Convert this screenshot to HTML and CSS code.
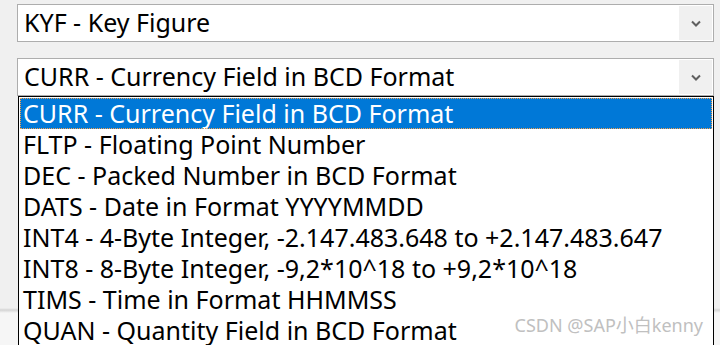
FILE: index.html
```html
<!DOCTYPE html>
<html lang="en">
<head>
    <meta charset="UTF-8">
    <title>Data Type</title>
    <link rel="stylesheet" href="styles.css">
</head>
<body>

<div class="form">
    <div class="combo">
        <div class="combo-text">KYF - Key Figure</div>
        <div class="combo-arrow">
            <svg width="10" height="7" viewBox="0 0 10 7"><path d="M1 1.5 L5 5.5 L9 1.5" fill="none" stroke="#5f5f5f" stroke-width="2"/></svg>
        </div>
    </div>

    <div class="combo combo-open">
        <div class="combo-text">CURR - Currency Field in BCD Format</div>
        <div class="combo-arrow">
            <svg width="10" height="7" viewBox="0 0 10 7"><path d="M1 1.5 L5 5.5 L9 1.5" fill="none" stroke="#5f5f5f" stroke-width="2"/></svg>
        </div>
    </div>

    <ul class="dropdown">
        <li class="selected">CURR - Currency Field in BCD Format</li>
        <li>FLTP - Floating Point Number</li>
        <li>DEC - Packed Number in BCD Format</li>
        <li>DATS - Date in Format YYYYMMDD</li>
        <li>INT4 - 4-Byte Integer, -2.147.483.648 to +2.147.483.647</li>
        <li>INT8 - 8-Byte Integer, -9,2*10^18 to +9,2*10^18</li>
        <li>TIMS - Time in Format HHMMSS</li>
        <li>QUAN - Quantity Field in BCD Format</li>
    </ul>
</div>

<div class="watermark">CSDN @SAP小白kenny</div>

</body>
</html>
```

FILE: styles.css
```css
/* Windows style combo boxes */
body {
    font-family: "Noto Sans", "Noto Sans CJK SC", sans-serif;
    background: linear-gradient(to bottom, #f0f0f0 308px, #d4d4d4 310px, #f6f6f6 313px);
    margin: 0;
    padding: 0;
    height: 345px;
    overflow: hidden;
    position: relative;
}

.form {
    padding: 4px 6px 0 17px;
    display: flex;
    flex-direction: column;
}

.combo {
    height: 38px;
    box-sizing: border-box;
    border: 1px solid #adadad;
    background-color: white;
    display: flex;
    align-items: stretch;
}

.combo-open {
    margin-top: 16px;
}

.combo-text {
    flex-grow: 1;
    font-size: 25px;
    line-height: 35px;
    padding-left: 6px;
    color: black;
    white-space: nowrap;
}

.combo-arrow {
    width: 33px;
    margin: 1px;
    background-color: #f0f0f0;
    display: flex;
    align-items: center;
    justify-content: center;
}

.dropdown {
    list-style-type: none;
    margin: 0 0 0 1px;
    padding: 1px;
    border: 1px solid black;
    border-bottom: none;
    background-color: white;
}

.dropdown li {
    height: 31px;
    line-height: 30px;
    font-size: 25px;
    padding-left: 3px;
    color: black;
    white-space: nowrap;
}

.dropdown li.selected {
    background-color: #0078d7;
    color: white;
    outline: 1px dotted #f0a050;
    outline-offset: -1px;
}

.watermark {
    position: absolute;
    right: 17px;
    bottom: 8px;
    font-size: 18px;
    color: #c0c0c0;
}
```
